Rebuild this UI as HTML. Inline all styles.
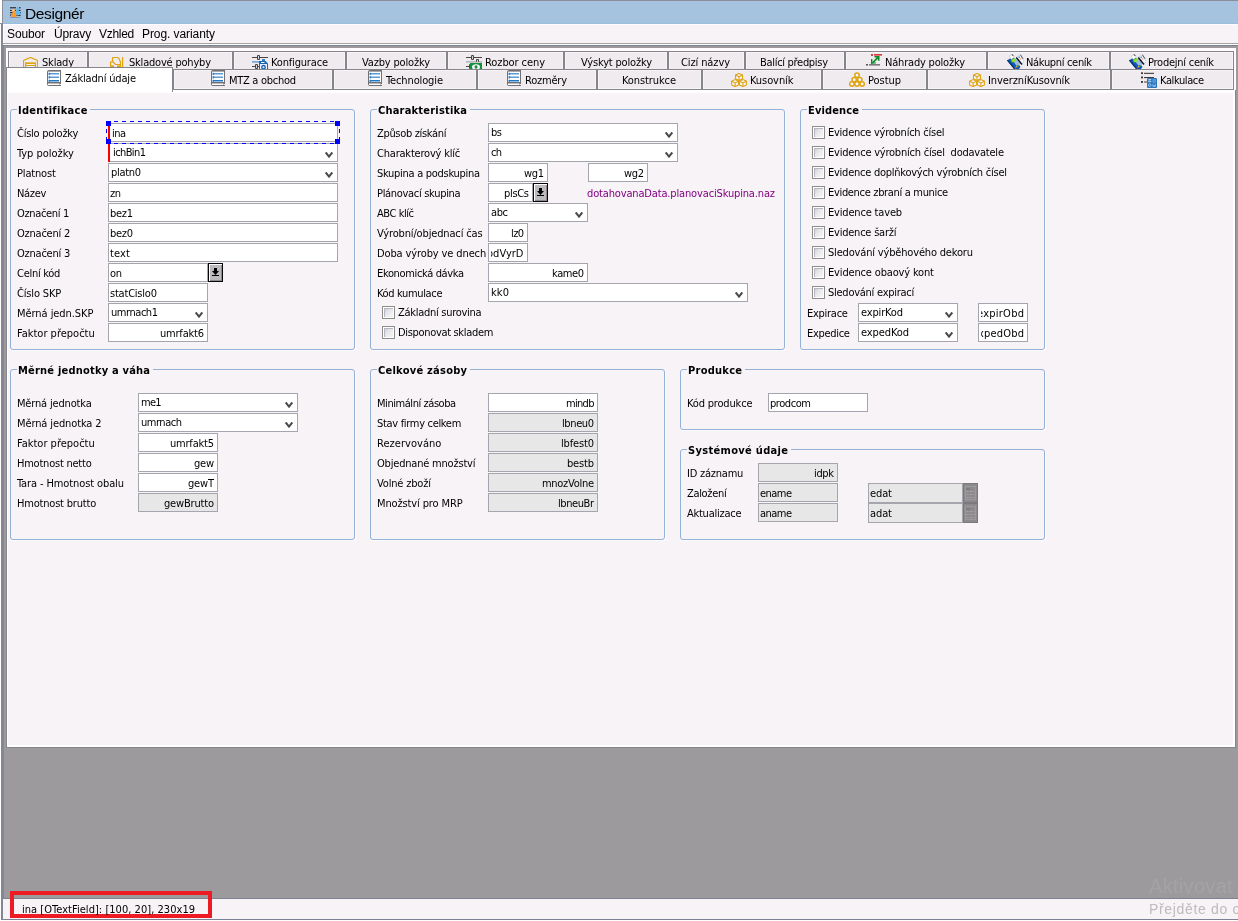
<!DOCTYPE html>
<html lang="cs"><head><meta charset="utf-8"><title>Designér</title><style>
html,body{margin:0;padding:0;background:#fff}
#r{position:relative;width:1238px;height:921px;overflow:hidden;background:#fff;font-family:"DejaVu Sans Condensed","DejaVu Sans","Liberation Sans",sans-serif;font-size:11px;color:#000}
#r div,#r svg,#r span{position:absolute;box-sizing:content-box}
#r span{white-space:pre;line-height:14px;height:14px}
.t{font-family:"DejaVu Sans Condensed","DejaVu Sans","Liberation Sans",sans-serif;font-size:11px}
.tt{font-family:"Liberation Sans","DejaVu Sans",sans-serif;font-size:15.5px}
.tm{font-family:"Liberation Sans","DejaVu Sans",sans-serif;font-size:12px}
.tw{font-family:"Liberation Sans","DejaVu Sans",sans-serif}
#r span.tt{line-height:20px;height:20px}
#r span.tm{line-height:16px;height:16px}
#r span.tw{line-height:24px;height:24px}
#r .c{overflow:hidden}
</style></head><body><div id="r">
<div style="left:3px;top:0px;width:1235px;height:1px;background:#8c8e9c;"></div>
<div style="left:1px;top:23px;width:2px;height:897px;background:#848694;"></div>
<div style="left:2px;top:0px;width:1px;height:23px;background:#8c8e9c;"></div>
<div style="left:0px;top:23px;width:3px;height:1px;background:#8c8e9c;"></div>
<div style="left:3px;top:1px;width:1235px;height:23px;background:#a5c3de;"></div>
<div style="left:3px;top:23px;width:1235px;height:1px;background:#9cbede;"></div>
<div style="left:3px;top:24px;width:1235px;height:19px;background:#f7f3f7;"></div>
<div style="left:3px;top:24px;width:1px;height:19px;background:#fffbff;"></div>
<div style="left:3px;top:24px;width:1235px;height:1px;background:#fffbff;"></div>
<div style="left:3px;top:43px;width:1235px;height:1px;background:#a5a2a5;"></div>
<div style="left:3px;top:44px;width:1235px;height:1px;background:#ffffff;"></div>
<div style="left:3px;top:45px;width:1235px;height:1px;background:#7b8294;"></div>
<div style="left:3px;top:46px;width:1px;height:852px;background:#848694;"></div>
<div style="left:4px;top:46px;width:1234px;height:852px;background:#9c9a9c;"></div>
<div style="left:6px;top:48px;width:1230px;height:42px;background:#fffbff;"></div>
<div style="left:6px;top:90px;width:1230px;height:658px;background:#84868c;"></div>
<div style="left:7px;top:90px;width:1228px;height:657px;background:#ffffff;"></div>
<div style="left:8px;top:93px;width:1225px;height:652px;background:#f7f3f7;"></div>
<div style="left:3px;top:898px;width:1235px;height:1px;background:#7b8294;"></div>
<div style="left:3px;top:899px;width:1235px;height:20px;background:#f7f3f7;"></div>
<div style="left:1px;top:919px;width:1237px;height:1px;background:#7b8294;"></div>
<svg style="left:10px;top:7px" width="11" height="11" viewBox="0 0 11 11"><path d="M0 .8h6M9 .8h1.600M0 3.400h1.600M5 3.400h1.200M8.500 3.400h2M0 5.700h2.600M10 5.700h1M0 8h1.600M6 8.300h4.600" stroke="#10101a" stroke-width="1" fill="none"/><path d="M0 10.500h10.600" stroke="#7b92ad" stroke-width=".9"/><path d="M7.600 0c1 0 1.300 .8 1.200 1.600-.1 1-.3 2 .2 2.700 1 .5 1.700 1.300 1.700 2.300 0 1.300-1.200 2-2.900 2s-2.900-.7-2.900-2c0-1 .7-1.800 1.500-2.300.5-.7.3-1.700.2-2.700C6.500 .8 6.800 0 7.600 0z" fill="#5abaef"/><path d="M3.700 1.900c1 0 1.500 .7 1.500 1.500 0 .9-.4 1.300-.4 2.100 0 1 1.800 1.500 1.800 3.200V10.100H1.100V8.700c0-1.700 1.600-2.200 1.600-3.200 0-.8-.4-1.200-.4-2.100 0-.8.500-1.500 1.400-1.500z" fill="#ff9a29"/><ellipse cx="3.700" cy="3.100" rx="1" ry=".6" fill="#fff3e0"/></svg>
<div style="left:8px;top:51px;width:78px;height:17px;background:#efebef;border:1px solid #84868c;border-bottom:none;box-shadow:inset 1px 1px 0 #f7f3f7,inset -1px 0 0 #f7f3f7"></div>
<svg style="left:23px;top:57px" width="15" height="10" viewBox="0 0 15 10"><path d="M.5 10V3.500L7.500 .4 14.500 3.500V10" fill="none" stroke="#dea510" stroke-width="1.150"/><rect x="2" y="5" width="11" height="1" fill="#e7bd52"/><rect x="2" y="6" width="11" height="1" fill="#dea510"/><rect x="2" y="7" width="1.200" height="3" fill="#dea510"/><rect x="11.800" y="7" width="1.200" height="3" fill="#dea510"/><rect x="2" y="8" width="11" height="1" fill="#dea510"/></svg>
<div style="left:88px;top:51px;width:143px;height:17px;background:#efebef;border:1px solid #84868c;border-bottom:none;box-shadow:inset 1px 1px 0 #f7f3f7,inset -1px 0 0 #f7f3f7"></div>
<svg style="left:110px;top:57px" width="14" height="10" viewBox="0 0 14 10"><path d="M2.500 4.500V1.500Q2.500 .5 3.500 .5H7.500L9 1.500 10.500 5V10M2.500 4.500L5.500 7.500H10.500M.6 10V5L2.500 4.500" fill="none" stroke="#dea510" stroke-width="1.200"/><rect x="12" y="0" width="1.200" height="10" fill="#dea510"/><rect x="1" y="8.400" width="3" height="1.600" fill="#dea510"/><rect x="7" y="8.400" width="3.500" height="1.600" fill="#dea510"/></svg>
<div style="left:233px;top:51px;width:111px;height:17px;background:#efebef;border:1px solid #84868c;border-bottom:none;box-shadow:inset 1px 1px 0 #f7f3f7,inset -1px 0 0 #f7f3f7"></div>
<svg style="left:252px;top:55px" width="16" height="14" viewBox="0 0 16 14"><rect x="0" y="2" width="16" height="1" fill="#4a4542"/><rect x="5" y="0" width="3" height="5" rx="1" fill="#4a4542"/><rect x="6" y="1" width="1" height="3" fill="#d6d3d6"/><rect x="0" y="11" width="7" height="1" fill="#4a4542"/><rect x="3" y="9" width="3" height="5" rx="1" fill="#4a4542"/><rect x="4" y="10" width="1" height="3" fill="#d6d3d6"/><rect x="0" y="6" width="8" height="1.800" fill="#84aad6"/><rect x="10" y="4" width="3" height="2.500" fill="#3a82c6"/><path d="M7 6h6.500l2.500 2.500v5.500h-9z" fill="#1565b5"/><rect x="9" y="7" width="3.500" height="1" fill="#fff"/><rect x="8" y="9" width="7" height="5" fill="#eef0ff"/><circle cx="11.500" cy="12.200" r="1.700" fill="none" stroke="#1565b5" stroke-width="1.300"/></svg>
<div style="left:346px;top:51px;width:99px;height:17px;background:#efebef;border:1px solid #84868c;border-bottom:none;box-shadow:inset 1px 1px 0 #f7f3f7,inset -1px 0 0 #f7f3f7"></div>
<div style="left:447px;top:51px;width:115px;height:17px;background:#efebef;border:1px solid #84868c;border-bottom:none;box-shadow:inset 1px 1px 0 #f7f3f7,inset -1px 0 0 #f7f3f7"></div>
<svg style="left:466px;top:55px" width="16" height="14" viewBox="0 0 16 14"><rect x="0" y="2" width="16" height="1" fill="#4a4542"/><rect x="5" y="0" width="3" height="5" rx="1" fill="#4a4542"/><rect x="6" y="1" width="1" height="3" fill="#d6d3d6"/><rect x="0" y="11" width="7" height="1" fill="#4a4542"/><rect x="3" y="9" width="3" height="5" rx="1" fill="#4a4542"/><rect x="4" y="10" width="1" height="3" fill="#d6d3d6"/><rect x="0" y="6" width="16" height="1.600" fill="#b5b5bd"/><rect x="10" y="4" width="3" height="3" rx="1" fill="#4a4542"/><rect x="11" y="5" width="1" height="2" fill="#d6d3d6"/><rect x="4" y="8" width="12" height="6" fill="#109439"/><ellipse cx="10" cy="12" rx="4" ry="2.800" fill="#fbeffb"/><ellipse cx="10" cy="12" rx="1.500" ry="1.800" fill="#109439"/></svg>
<div style="left:564px;top:51px;width:102px;height:17px;background:#efebef;border:1px solid #84868c;border-bottom:none;box-shadow:inset 1px 1px 0 #f7f3f7,inset -1px 0 0 #f7f3f7"></div>
<div style="left:668px;top:51px;width:75px;height:17px;background:#efebef;border:1px solid #84868c;border-bottom:none;box-shadow:inset 1px 1px 0 #f7f3f7,inset -1px 0 0 #f7f3f7"></div>
<div style="left:745px;top:51px;width:98px;height:17px;background:#efebef;border:1px solid #84868c;border-bottom:none;box-shadow:inset 1px 1px 0 #f7f3f7,inset -1px 0 0 #f7f3f7"></div>
<div style="left:845px;top:51px;width:140px;height:17px;background:#efebef;border:1px solid #84868c;border-bottom:none;box-shadow:inset 1px 1px 0 #f7f3f7,inset -1px 0 0 #f7f3f7"></div>
<svg style="left:866px;top:54px" width="16" height="13" viewBox="0 0 16 13"><rect x="5" y="0" width="2" height="2" fill="#ce4242"/><rect x="8" y="0" width="8" height="1" fill="#ce4242"/><rect x="8" y="1" width="8" height="1" fill="#e77373"/><path d="M6.500 9L12 3.300" stroke="#088a29" stroke-width="1.700"/><path d="M8.500 2h5v4.800h-1.600v-3.200h-3.400z" fill="#088a29"/><path d="M5 5h1.400v3.400l3.600 .2v1.400h-5z" fill="#088a29"/><path d="M5 10l5-1.500v1.500z" fill="#7bc794"/><rect x="0" y="10" width="2" height="1.600" fill="#5a595a"/><rect x="3" y="10" width="11" height="1.600" fill="#7b797b"/></svg>
<div style="left:987px;top:51px;width:121px;height:17px;background:#efebef;border:1px solid #84868c;border-bottom:none;box-shadow:inset 1px 1px 0 #f7f3f7,inset -1px 0 0 #f7f3f7"></div>
<svg style="left:1007px;top:54px" width="17" height="15" viewBox="0 0 17 15"><path d="M0 6.500L6 2.500 13.500 13 12 15H7z" fill="#1059b5"/><path d="M0 6.500l1-.7L8.500 15H7z" fill="#08306b"/><path d="M5.500 6.500l4.500-3 4 6-3.500 3.500z" fill="#9cbade"/><path d="M2.200 2.200l3.300-2 2 3-3.300 2.200z" fill="#fffff7" stroke="#bdbdbd" stroke-width=".5"/><path d="M5 .3l1.300 1.800" stroke="#313131" stroke-width="1"/><ellipse cx="6.500" cy="6.400" rx="2.300" ry="1.500" transform="rotate(-30 6.500 6.400)" fill="#8ce718"/><path d="M9.500 3.200L13 .8l4 6.500-2 3z" fill="#f7fbff" stroke="#a5c3de" stroke-width=".6"/><path d="M9.300 3.500l5.700 7" stroke="#101010" stroke-width="1.300"/><rect x="11.500" y="2.500" width="1.500" height="1.500" fill="#4a96e7"/><rect x="12.500" y="4.200" width="1.800" height="1.500" fill="#ffa58c"/><path d="M13.500 .8l2.500 4" stroke="#313131" stroke-width=".8"/><rect x="10" y="11" width="1.600" height="1.500" fill="#21964a"/><rect x="8.800" y="12" width="1.400" height="1.300" fill="#efa521"/><rect x="7.800" y="13" width="1.200" height="2" fill="#d63a31"/></svg>
<div style="left:1110px;top:51px;width:122px;height:17px;background:#efebef;border:1px solid #84868c;border-bottom:none;box-shadow:inset 1px 1px 0 #f7f3f7,inset -1px 0 0 #f7f3f7"></div>
<svg style="left:1129px;top:54px" width="17" height="15" viewBox="0 0 17 15"><path d="M0 6.500L6 2.500 13.500 13 12 15H7z" fill="#1059b5"/><path d="M0 6.500l1-.7L8.500 15H7z" fill="#08306b"/><path d="M5.500 6.500l4.500-3 4 6-3.500 3.500z" fill="#9cbade"/><path d="M2.200 2.200l3.300-2 2 3-3.300 2.200z" fill="#fffff7" stroke="#bdbdbd" stroke-width=".5"/><path d="M5 .3l1.300 1.800" stroke="#313131" stroke-width="1"/><ellipse cx="6.500" cy="6.400" rx="2.300" ry="1.500" transform="rotate(-30 6.500 6.400)" fill="#8ce718"/><path d="M9.500 3.200L13 .8l4 6.500-2 3z" fill="#f7fbff" stroke="#a5c3de" stroke-width=".6"/><path d="M9.300 3.500l5.700 7" stroke="#101010" stroke-width="1.300"/><rect x="11.500" y="2.500" width="1.500" height="1.500" fill="#4a96e7"/><rect x="12.500" y="4.200" width="1.800" height="1.500" fill="#ffa58c"/><path d="M13.500 .8l2.500 4" stroke="#313131" stroke-width=".8"/><rect x="10" y="11" width="1.600" height="1.500" fill="#21964a"/><rect x="8.800" y="12" width="1.400" height="1.300" fill="#efa521"/><rect x="7.800" y="13" width="1.200" height="2" fill="#d63a31"/></svg>
<div style="left:173px;top:69px;width:158px;height:19px;background:#efebef;border:1px solid #84868c;box-shadow:inset 1px 1px 0 #f7f3f7,inset -1px -1px 0 #f7f3f7"></div>
<svg style="left:211px;top:70px" width="14" height="16" viewBox="0 0 14 16"><path d="M0 2a2 2 0 0 1 2-2h12v13h-14z" fill="#737173"/><rect x="1" y="1.600" width="12" height="10.400" fill="#fff"/><rect x="2" y="3" width="10" height="1.500" fill="#5a9ad6"/><rect x="2" y="6.500" width="10" height="1.500" fill="#5a9ad6"/><rect x="2" y="10" width="10" height="1.500" fill="#2179c6"/><rect x="1.500" y="2.800" width="1.500" height="2" fill="#2179c6"/><rect x="1.500" y="6.300" width="1.500" height="2" fill="#2179c6"/><rect x="1.500" y="9.800" width="1.500" height="2" fill="#2179c6"/><path d="M0 13h14v1h-1v1h1v1h-12a2 2 0 0 1-2-2z" fill="#737173"/><rect x="1" y="13.500" width="11.500" height="1.500" fill="#fff"/></svg>
<div style="left:333px;top:69px;width:142px;height:19px;background:#efebef;border:1px solid #84868c;box-shadow:inset 1px 1px 0 #f7f3f7,inset -1px -1px 0 #f7f3f7"></div>
<svg style="left:368px;top:70px" width="14" height="16" viewBox="0 0 14 16"><path d="M0 2a2 2 0 0 1 2-2h12v13h-14z" fill="#737173"/><rect x="1" y="1.600" width="12" height="10.400" fill="#fff"/><rect x="2" y="3" width="10" height="1.500" fill="#5a9ad6"/><rect x="2" y="6.500" width="10" height="1.500" fill="#5a9ad6"/><rect x="2" y="10" width="10" height="1.500" fill="#2179c6"/><rect x="1.500" y="2.800" width="1.500" height="2" fill="#2179c6"/><rect x="1.500" y="6.300" width="1.500" height="2" fill="#2179c6"/><rect x="1.500" y="9.800" width="1.500" height="2" fill="#2179c6"/><path d="M0 13h14v1h-1v1h1v1h-12a2 2 0 0 1-2-2z" fill="#737173"/><rect x="1" y="13.500" width="11.500" height="1.500" fill="#fff"/></svg>
<div style="left:477px;top:69px;width:118px;height:19px;background:#efebef;border:1px solid #84868c;box-shadow:inset 1px 1px 0 #f7f3f7,inset -1px -1px 0 #f7f3f7"></div>
<svg style="left:507px;top:70px" width="14" height="16" viewBox="0 0 14 16"><path d="M0 2a2 2 0 0 1 2-2h12v13h-14z" fill="#737173"/><rect x="1" y="1.600" width="12" height="10.400" fill="#fff"/><rect x="2" y="3" width="10" height="1.500" fill="#5a9ad6"/><rect x="2" y="6.500" width="10" height="1.500" fill="#5a9ad6"/><rect x="2" y="10" width="10" height="1.500" fill="#2179c6"/><rect x="1.500" y="2.800" width="1.500" height="2" fill="#2179c6"/><rect x="1.500" y="6.300" width="1.500" height="2" fill="#2179c6"/><rect x="1.500" y="9.800" width="1.500" height="2" fill="#2179c6"/><path d="M0 13h14v1h-1v1h1v1h-12a2 2 0 0 1-2-2z" fill="#737173"/><rect x="1" y="13.500" width="11.500" height="1.500" fill="#fff"/></svg>
<div style="left:597px;top:69px;width:103px;height:19px;background:#efebef;border:1px solid #84868c;box-shadow:inset 1px 1px 0 #f7f3f7,inset -1px -1px 0 #f7f3f7"></div>
<div style="left:702px;top:69px;width:118px;height:19px;background:#efebef;border:1px solid #84868c;box-shadow:inset 1px 1px 0 #f7f3f7,inset -1px -1px 0 #f7f3f7"></div>
<svg style="left:731px;top:73px" width="16" height="14" viewBox="0 0 16 14"><path d="M4.5 2.1l3.500-1.600 3.500 1.600v3.700l-3.500 1.700-3.500-1.700z" fill="#f7f3ff" stroke="#dea510" stroke-width="1.100"/><path d="M4.5 2.1l3.500 1.700 3.500-1.700M8.0 3.8000000000000003v3.700" fill="none" stroke="#dea510" stroke-width="1.100"/><path d="M0.6 8.2l3.500-1.600 3.500 1.600v3.700l-3.500 1.700-3.500-1.700z" fill="#f7f3ff" stroke="#dea510" stroke-width="1.100"/><path d="M0.6 8.2l3.500 1.700 3.500-1.700M4.1 9.9v3.700" fill="none" stroke="#dea510" stroke-width="1.100"/><path d="M8.4 8.2l3.500-1.600 3.500 1.600v3.700l-3.500 1.700-3.500-1.700z" fill="#f7f3ff" stroke="#dea510" stroke-width="1.100"/><path d="M8.4 8.2l3.500 1.700 3.500-1.700M11.9 9.9v3.700" fill="none" stroke="#dea510" stroke-width="1.100"/></svg>
<div style="left:822px;top:69px;width:103px;height:19px;background:#efebef;border:1px solid #84868c;box-shadow:inset 1px 1px 0 #f7f3f7,inset -1px -1px 0 #f7f3f7"></div>
<svg style="left:849px;top:72px" width="16" height="15" viewBox="0 0 16 15"><circle cx="8" cy="3.2" r="2.200" fill="#f7f3ff" stroke="#dea510" stroke-width="1.500"/><circle cx="5.2" cy="7.8" r="2.200" fill="#f7f3ff" stroke="#dea510" stroke-width="1.500"/><circle cx="10.8" cy="7.8" r="2.200" fill="#f7f3ff" stroke="#dea510" stroke-width="1.500"/><circle cx="2.9" cy="12" r="2.200" fill="#f7f3ff" stroke="#dea510" stroke-width="1.500"/><circle cx="8" cy="12" r="2.200" fill="#f7f3ff" stroke="#dea510" stroke-width="1.500"/><circle cx="13.1" cy="12" r="2.200" fill="#f7f3ff" stroke="#dea510" stroke-width="1.500"/></svg>
<div style="left:927px;top:69px;width:182px;height:19px;background:#efebef;border:1px solid #84868c;box-shadow:inset 1px 1px 0 #f7f3f7,inset -1px -1px 0 #f7f3f7"></div>
<svg style="left:969px;top:73px" width="16" height="14" viewBox="0 0 16 14"><path d="M4.5 2.1l3.500-1.600 3.500 1.600v3.700l-3.500 1.700-3.500-1.700z" fill="#f7f3ff" stroke="#dea510" stroke-width="1.100"/><path d="M4.5 2.1l3.500 1.700 3.500-1.700M8.0 3.8000000000000003v3.700" fill="none" stroke="#dea510" stroke-width="1.100"/><path d="M0.6 8.2l3.500-1.600 3.500 1.600v3.700l-3.500 1.700-3.500-1.700z" fill="#f7f3ff" stroke="#dea510" stroke-width="1.100"/><path d="M0.6 8.2l3.500 1.700 3.500-1.700M4.1 9.9v3.700" fill="none" stroke="#dea510" stroke-width="1.100"/><path d="M8.4 8.2l3.500-1.600 3.500 1.600v3.700l-3.500 1.700-3.500-1.700z" fill="#f7f3ff" stroke="#dea510" stroke-width="1.100"/><path d="M8.4 8.2l3.500 1.700 3.500-1.700M11.9 9.9v3.700" fill="none" stroke="#dea510" stroke-width="1.100"/></svg>
<div style="left:1111px;top:69px;width:121px;height:19px;background:#efebef;border:1px solid #84868c;box-shadow:inset 1px 1px 0 #f7f3f7,inset -1px -1px 0 #f7f3f7"></div>
<svg style="left:1141px;top:72px" width="16" height="16" viewBox="0 0 16 16"><rect x="0" y=".3" width="2" height="1.800" fill="#423c39"/><rect x="0" y="4.500" width="2" height="1.900" fill="#423c39"/><rect x="0" y="9" width="2" height="1.900" fill="#423c39"/><rect x="3" y=".8" width="10" height="1.100" fill="#423c39"/><rect x="3" y="5" width="10" height="1.100" fill="#423c39"/><rect x="3" y="9.400" width="4" height="1.200" fill="#5a5a5a"/><rect x="6" y="6" width="10" height="10" rx="1" fill="#2975bd"/><rect x="7.200" y="7.300" width="3" height="1" fill="#e7f3ff"/><rect x="7.200" y="9" width="3" height="1.200" fill="#a5cbef"/><rect x="11.500" y="7.300" width="3.300" height="3.200" fill="#6ba6de"/><rect x="12.500" y="8.300" width="1.300" height="1.200" fill="#2975bd"/><circle cx="8.700" cy="13.200" r="1.300" fill="none" stroke="#a5cbef" stroke-width="1"/><rect x="11.500" y="11.800" width="3.300" height="3" fill="#8cbae7"/><rect x="12.300" y="11.800" width="1.700" height="1.200" fill="#2975bd"/></svg>
<div style="left:6px;top:67px;width:165px;height:24px;background:#fff;border:1px solid #84868c;border-bottom:none"></div>
<div style="left:7px;top:90px;width:165px;height:3px;background:#fff;"></div>
<svg style="left:47px;top:70px" width="14" height="16" viewBox="0 0 14 16"><path d="M0 2a2 2 0 0 1 2-2h12v13h-14z" fill="#737173"/><rect x="1" y="1.600" width="12" height="10.400" fill="#fff"/><rect x="2" y="3" width="10" height="1.500" fill="#5a9ad6"/><rect x="2" y="6.500" width="10" height="1.500" fill="#5a9ad6"/><rect x="2" y="10" width="10" height="1.500" fill="#2179c6"/><rect x="1.500" y="2.800" width="1.500" height="2" fill="#2179c6"/><rect x="1.500" y="6.300" width="1.500" height="2" fill="#2179c6"/><rect x="1.500" y="9.800" width="1.500" height="2" fill="#2179c6"/><path d="M0 13h14v1h-1v1h1v1h-12a2 2 0 0 1-2-2z" fill="#737173"/><rect x="1" y="13.500" width="11.500" height="1.500" fill="#fff"/></svg>
<div style="left:10px;top:109px;width:343px;height:239px;border:1px solid #94b2d6;border-radius:3px;box-shadow:1px 1px 0 #fffbff"></div>
<div style="left:17px;top:108px;width:73px;height:3px;background:#f7f3f7;"></div>
<div style="left:108px;top:123px;width:228px;height:17px;background:#fff;border:1px solid #a5a6ad"></div>
<div style="left:108px;top:123px;width:2px;height:19px;background:#f00;"></div>
<div style="left:108px;top:143px;width:228px;height:17px;background:#fff;border:1px solid #a5a6ad"></div>
<div style="left:108px;top:143px;width:2px;height:19px;background:#f00;"></div>
<svg style="left:325px;top:152px" width="8" height="6" viewBox="0 0 8 6"><path d="M.7 .4L4 4.600 7.300 .4" fill="none" stroke="#4a4a4a" stroke-width="2"/></svg>
<div style="left:108px;top:163px;width:228px;height:17px;background:#fff;border:1px solid #a5a6ad"></div>
<svg style="left:325px;top:172px" width="8" height="6" viewBox="0 0 8 6"><path d="M.7 .4L4 4.600 7.300 .4" fill="none" stroke="#4a4a4a" stroke-width="2"/></svg>
<div style="left:108px;top:183px;width:228px;height:17px;background:#fff;border:1px solid #a5a6ad"></div>
<div style="left:108px;top:203px;width:228px;height:17px;background:#fff;border:1px solid #a5a6ad"></div>
<div style="left:108px;top:223px;width:228px;height:17px;background:#fff;border:1px solid #a5a6ad"></div>
<div style="left:108px;top:243px;width:228px;height:17px;background:#fff;border:1px solid #a5a6ad"></div>
<div style="left:108px;top:263px;width:98px;height:17px;background:#fff;border:1px solid #a5a6ad"></div>
<div style="left:208px;top:263px;width:13px;height:17px;background:#bdbabd;border:1px solid #080808;box-shadow:inset 1px 1px 0 #fff,inset -1px -1px 0 #8c8a8c"></div>
<svg style="left:212px;top:268px" width="7" height="8" viewBox="0 0 7 8"><path d="M2 0h3v3h2l-3.500 4-3.500-4h2z" fill="#000"/><rect x="0" y="7" width="7" height="1" fill="#000"/></svg>
<div style="left:108px;top:283px;width:98px;height:17px;background:#fff;border:1px solid #a5a6ad"></div>
<div style="left:108px;top:303px;width:98px;height:17px;background:#fff;border:1px solid #a5a6ad"></div>
<svg style="left:195px;top:312px" width="8" height="6" viewBox="0 0 8 6"><path d="M.7 .4L4 4.600 7.300 .4" fill="none" stroke="#4a4a4a" stroke-width="2"/></svg>
<div style="left:108px;top:323px;width:98px;height:17px;background:#fff;border:1px solid #a5a6ad"></div>
<svg style="left:106px;top:121px" width="234" height="23" viewBox="0 0 234 23"><path d="M0 .5h234M0 22.500h234M.5 0v23M233.500 0v23" fill="none" stroke="#0000ff" stroke-width="1" stroke-dasharray="4 4"/><rect x="0" y="0" width="5" height="5" fill="#00f"/><rect x="229" y="0" width="5" height="5" fill="#00f"/><rect x="0" y="18" width="5" height="5" fill="#00f"/><rect x="229" y="18" width="5" height="5" fill="#00f"/></svg>
<div style="left:370px;top:109px;width:413px;height:239px;border:1px solid #94b2d6;border-radius:3px;box-shadow:1px 1px 0 #fffbff"></div>
<div style="left:377px;top:108px;width:93px;height:3px;background:#f7f3f7;"></div>
<div style="left:488px;top:123px;width:188px;height:17px;background:#fff;border:1px solid #a5a6ad"></div>
<svg style="left:665px;top:132px" width="8" height="6" viewBox="0 0 8 6"><path d="M.7 .4L4 4.600 7.300 .4" fill="none" stroke="#4a4a4a" stroke-width="2"/></svg>
<div style="left:488px;top:143px;width:188px;height:17px;background:#fff;border:1px solid #a5a6ad"></div>
<svg style="left:665px;top:152px" width="8" height="6" viewBox="0 0 8 6"><path d="M.7 .4L4 4.600 7.300 .4" fill="none" stroke="#4a4a4a" stroke-width="2"/></svg>
<div style="left:488px;top:163px;width:58px;height:17px;background:#fff;border:1px solid #a5a6ad"></div>
<div style="left:588px;top:163px;width:58px;height:17px;background:#fff;border:1px solid #a5a6ad"></div>
<div style="left:488px;top:183px;width:43px;height:17px;background:#fff;border:1px solid #a5a6ad"></div>
<div style="left:533px;top:183px;width:13px;height:17px;background:#bdbabd;border:1px solid #080808;box-shadow:inset 1px 1px 0 #fff,inset -1px -1px 0 #8c8a8c"></div>
<svg style="left:537px;top:188px" width="7" height="8" viewBox="0 0 7 8"><path d="M2 0h3v3h2l-3.500 4-3.500-4h2z" fill="#000"/><rect x="0" y="7" width="7" height="1" fill="#000"/></svg>
<div style="left:488px;top:203px;width:98px;height:17px;background:#fff;border:1px solid #a5a6ad"></div>
<svg style="left:575px;top:212px" width="8" height="6" viewBox="0 0 8 6"><path d="M.7 .4L4 4.600 7.300 .4" fill="none" stroke="#4a4a4a" stroke-width="2"/></svg>
<div style="left:488px;top:223px;width:38px;height:17px;background:#fff;border:1px solid #a5a6ad"></div>
<div style="left:488px;top:243px;width:38px;height:17px;background:#fff;border:1px solid #a5a6ad"></div>
<div style="left:488px;top:263px;width:98px;height:17px;background:#fff;border:1px solid #a5a6ad"></div>
<div style="left:488px;top:283px;width:258px;height:17px;background:#fff;border:1px solid #a5a6ad"></div>
<svg style="left:735px;top:292px" width="8" height="6" viewBox="0 0 8 6"><path d="M.7 .4L4 4.600 7.300 .4" fill="none" stroke="#4a4a4a" stroke-width="2"/></svg>
<div style="left:382px;top:306px;width:11px;height:11px;background:#fff;border:1px solid #8c8e8c"></div>
<div style="left:384px;top:308px;width:9px;height:9px;background:linear-gradient(135deg,#c6c7ce,#e7e7eb 45%,#f7f7f7);box-shadow:inset 1px 1px 0 #b5b6c0"></div>
<div style="left:382px;top:326px;width:11px;height:11px;background:#fff;border:1px solid #8c8e8c"></div>
<div style="left:384px;top:328px;width:9px;height:9px;background:linear-gradient(135deg,#c6c7ce,#e7e7eb 45%,#f7f7f7);box-shadow:inset 1px 1px 0 #b5b6c0"></div>
<div style="left:800px;top:109px;width:243px;height:239px;border:1px solid #94b2d6;border-radius:3px;box-shadow:1px 1px 0 #fffbff"></div>
<div style="left:807px;top:108px;width:55px;height:3px;background:#f7f3f7;"></div>
<div style="left:812px;top:126px;width:11px;height:11px;background:#fff;border:1px solid #8c8e8c"></div>
<div style="left:814px;top:128px;width:9px;height:9px;background:linear-gradient(135deg,#c6c7ce,#e7e7eb 45%,#f7f7f7);box-shadow:inset 1px 1px 0 #b5b6c0"></div>
<div style="left:812px;top:146px;width:11px;height:11px;background:#fff;border:1px solid #8c8e8c"></div>
<div style="left:814px;top:148px;width:9px;height:9px;background:linear-gradient(135deg,#c6c7ce,#e7e7eb 45%,#f7f7f7);box-shadow:inset 1px 1px 0 #b5b6c0"></div>
<div style="left:812px;top:166px;width:11px;height:11px;background:#fff;border:1px solid #8c8e8c"></div>
<div style="left:814px;top:168px;width:9px;height:9px;background:linear-gradient(135deg,#c6c7ce,#e7e7eb 45%,#f7f7f7);box-shadow:inset 1px 1px 0 #b5b6c0"></div>
<div style="left:812px;top:186px;width:11px;height:11px;background:#fff;border:1px solid #8c8e8c"></div>
<div style="left:814px;top:188px;width:9px;height:9px;background:linear-gradient(135deg,#c6c7ce,#e7e7eb 45%,#f7f7f7);box-shadow:inset 1px 1px 0 #b5b6c0"></div>
<div style="left:812px;top:206px;width:11px;height:11px;background:#fff;border:1px solid #8c8e8c"></div>
<div style="left:814px;top:208px;width:9px;height:9px;background:linear-gradient(135deg,#c6c7ce,#e7e7eb 45%,#f7f7f7);box-shadow:inset 1px 1px 0 #b5b6c0"></div>
<div style="left:812px;top:226px;width:11px;height:11px;background:#fff;border:1px solid #8c8e8c"></div>
<div style="left:814px;top:228px;width:9px;height:9px;background:linear-gradient(135deg,#c6c7ce,#e7e7eb 45%,#f7f7f7);box-shadow:inset 1px 1px 0 #b5b6c0"></div>
<div style="left:812px;top:246px;width:11px;height:11px;background:#fff;border:1px solid #8c8e8c"></div>
<div style="left:814px;top:248px;width:9px;height:9px;background:linear-gradient(135deg,#c6c7ce,#e7e7eb 45%,#f7f7f7);box-shadow:inset 1px 1px 0 #b5b6c0"></div>
<div style="left:812px;top:266px;width:11px;height:11px;background:#fff;border:1px solid #8c8e8c"></div>
<div style="left:814px;top:268px;width:9px;height:9px;background:linear-gradient(135deg,#c6c7ce,#e7e7eb 45%,#f7f7f7);box-shadow:inset 1px 1px 0 #b5b6c0"></div>
<div style="left:812px;top:286px;width:11px;height:11px;background:#fff;border:1px solid #8c8e8c"></div>
<div style="left:814px;top:288px;width:9px;height:9px;background:linear-gradient(135deg,#c6c7ce,#e7e7eb 45%,#f7f7f7);box-shadow:inset 1px 1px 0 #b5b6c0"></div>
<div style="left:858px;top:303px;width:98px;height:17px;background:#fff;border:1px solid #a5a6ad"></div>
<svg style="left:945px;top:312px" width="8" height="6" viewBox="0 0 8 6"><path d="M.7 .4L4 4.600 7.300 .4" fill="none" stroke="#4a4a4a" stroke-width="2"/></svg>
<div style="left:978px;top:303px;width:48px;height:17px;background:#fff;border:1px solid #a5a6ad"></div>
<div style="left:858px;top:323px;width:98px;height:17px;background:#fff;border:1px solid #a5a6ad"></div>
<svg style="left:945px;top:332px" width="8" height="6" viewBox="0 0 8 6"><path d="M.7 .4L4 4.600 7.300 .4" fill="none" stroke="#4a4a4a" stroke-width="2"/></svg>
<div style="left:978px;top:323px;width:48px;height:17px;background:#fff;border:1px solid #a5a6ad"></div>
<div style="left:10px;top:369px;width:343px;height:169px;border:1px solid #94b2d6;border-radius:3px;box-shadow:1px 1px 0 #fffbff"></div>
<div style="left:17px;top:368px;width:136px;height:3px;background:#f7f3f7;"></div>
<div style="left:138px;top:393px;width:158px;height:17px;background:#fff;border:1px solid #a5a6ad"></div>
<svg style="left:285px;top:402px" width="8" height="6" viewBox="0 0 8 6"><path d="M.7 .4L4 4.600 7.300 .4" fill="none" stroke="#4a4a4a" stroke-width="2"/></svg>
<div style="left:138px;top:413px;width:158px;height:17px;background:#fff;border:1px solid #a5a6ad"></div>
<svg style="left:285px;top:422px" width="8" height="6" viewBox="0 0 8 6"><path d="M.7 .4L4 4.600 7.300 .4" fill="none" stroke="#4a4a4a" stroke-width="2"/></svg>
<div style="left:138px;top:433px;width:78px;height:17px;background:#fff;border:1px solid #a5a6ad"></div>
<div style="left:138px;top:453px;width:78px;height:17px;background:#fff;border:1px solid #a5a6ad"></div>
<div style="left:138px;top:473px;width:78px;height:17px;background:#fff;border:1px solid #a5a6ad"></div>
<div style="left:138px;top:493px;width:78px;height:17px;background:#e7e7e7;border:1px solid #a5a6ad"></div>
<div style="left:370px;top:369px;width:293px;height:169px;border:1px solid #94b2d6;border-radius:3px;box-shadow:1px 1px 0 #fffbff"></div>
<div style="left:377px;top:368px;width:93px;height:3px;background:#f7f3f7;"></div>
<div style="left:488px;top:393px;width:108px;height:17px;background:#fff;border:1px solid #a5a6ad"></div>
<div style="left:488px;top:413px;width:108px;height:17px;background:#e7e7e7;border:1px solid #a5a6ad"></div>
<div style="left:488px;top:433px;width:108px;height:17px;background:#e7e7e7;border:1px solid #a5a6ad"></div>
<div style="left:488px;top:453px;width:108px;height:17px;background:#e7e7e7;border:1px solid #a5a6ad"></div>
<div style="left:488px;top:473px;width:108px;height:17px;background:#e7e7e7;border:1px solid #a5a6ad"></div>
<div style="left:488px;top:493px;width:108px;height:17px;background:#e7e7e7;border:1px solid #a5a6ad"></div>
<div style="left:680px;top:369px;width:363px;height:59px;border:1px solid #94b2d6;border-radius:3px;box-shadow:1px 1px 0 #fffbff"></div>
<div style="left:687px;top:368px;width:58px;height:3px;background:#f7f3f7;"></div>
<div style="left:768px;top:393px;width:98px;height:17px;background:#fff;border:1px solid #a5a6ad"></div>
<div style="left:680px;top:449px;width:363px;height:89px;border:1px solid #94b2d6;border-radius:3px;box-shadow:1px 1px 0 #fffbff"></div>
<div style="left:687px;top:448px;width:104px;height:3px;background:#f7f3f7;"></div>
<div style="left:758px;top:463px;width:78px;height:17px;background:#e7e7e7;border:1px solid #a5a6ad"></div>
<div style="left:758px;top:483px;width:78px;height:17px;background:#e7e7e7;border:1px solid #a5a6ad"></div>
<div style="left:868px;top:483px;width:93px;height:18px;background:#e7e7e7;border:1px solid #a5a6ad"></div>
<div style="left:963px;top:483px;width:13px;height:18px;background:#8c8a8c;border:1px solid #7b797b"></div>
<svg style="left:965px;top:486px" width="11" height="14" viewBox="0 0 11 14"><rect x=".5" y=".5" width="10" height="13" fill="none" stroke="#9c9a9c" stroke-width="1"/><rect x="1" y="2" width="4" height="1.500" fill="#7b797b"/><path d="M1.500 5.500h2M4.500 5.500h3M8.500 5.500h1M1.500 8.500h2M4.500 8.500h3M8.500 8.500h1M1.500 11.500h2M4.500 11.500h3M8.500 11.500h1" stroke="#a5a3a5" stroke-width="1.200"/></svg>
<div style="left:758px;top:503px;width:78px;height:17px;background:#e7e7e7;border:1px solid #a5a6ad"></div>
<div style="left:868px;top:503px;width:93px;height:18px;background:#e7e7e7;border:1px solid #a5a6ad"></div>
<div style="left:963px;top:503px;width:13px;height:18px;background:#8c8a8c;border:1px solid #7b797b"></div>
<svg style="left:965px;top:506px" width="11" height="14" viewBox="0 0 11 14"><rect x=".5" y=".5" width="10" height="13" fill="none" stroke="#9c9a9c" stroke-width="1"/><rect x="1" y="2" width="4" height="1.500" fill="#7b797b"/><path d="M1.500 5.500h2M4.500 5.500h3M8.500 5.500h1M1.500 8.500h2M4.500 8.500h3M8.500 8.500h1M1.500 11.500h2M4.500 11.500h3M8.500 11.500h1" stroke="#a5a3a5" stroke-width="1.200"/></svg>
<div style="left:10px;top:891px;width:194px;height:19px;border:4px solid #ed1c24"></div>
<div id="tx" style="left:0;top:0;width:1238px;height:921px;will-change:transform">
<span class="tt" id="T0" style="left:25px;top:4px;letter-spacing:-0.379px;">Designér</span>
<span class="tm" id="T1" style="left:7px;top:26px;letter-spacing:-0.117px;">Soubor</span>
<span class="tm" id="T2" style="left:54px;top:26px;letter-spacing:-0.169px;">Úpravy</span>
<span class="tm" id="T3" style="left:99px;top:26px;letter-spacing:-0.284px;">Vzhled</span>
<span class="tm" id="T4" style="left:142px;top:26px;letter-spacing:-0.075px;">Prog. varianty</span>
<div class="c" style="left:8px;top:51px;width:80px;height:16px">
<span class="t" id="T5" style="left:34px;top:5px;letter-spacing:-0.194px;">Sklady</span></div>
<div class="c" style="left:88px;top:51px;width:145px;height:18px">
<span class="t" id="T6" style="left:41px;top:5px;letter-spacing:-0.204px;">Skladové pohyby</span></div>
<div class="c" style="left:233px;top:51px;width:113px;height:18px">
<span class="t" id="T7" style="left:38px;top:5px;letter-spacing:-0.173px;">Konfigurace</span></div>
<div class="c" style="left:346px;top:51px;width:101px;height:18px">
<span class="t" id="T8" style="left:16px;top:5px;letter-spacing:-0.165px;">Vazby položky</span></div>
<div class="c" style="left:447px;top:51px;width:117px;height:18px">
<span class="t" id="T9" style="left:38px;top:5px;letter-spacing:-0.084px;">Rozbor ceny</span></div>
<div class="c" style="left:564px;top:51px;width:104px;height:18px">
<span class="t" id="T10" style="left:17px;top:5px;letter-spacing:-0.172px;">Výskyt položky</span></div>
<div class="c" style="left:668px;top:51px;width:77px;height:18px">
<span class="t" id="T11" style="left:13px;top:5px;letter-spacing:-0.111px;">Cizí názvy</span></div>
<div class="c" style="left:745px;top:51px;width:100px;height:18px">
<span class="t" id="T12" style="left:15px;top:5px;letter-spacing:-0.301px;">Balící předpisy</span></div>
<div class="c" style="left:845px;top:51px;width:142px;height:18px">
<span class="t" id="T13" style="left:40px;top:5px;letter-spacing:-0.192px;">Náhrady položky</span></div>
<div class="c" style="left:987px;top:51px;width:123px;height:18px">
<span class="t" id="T14" style="left:39px;top:5px;letter-spacing:-0.323px;">Nákupní ceník</span></div>
<div class="c" style="left:1110px;top:51px;width:124px;height:18px">
<span class="t" id="T15" style="left:38px;top:5px;letter-spacing:-0.249px;">Prodejní ceník</span></div>
<span class="t" id="T16" style="left:229px;top:74px;letter-spacing:-0.283px;">MTZ a obchod</span>
<span class="t" id="T17" style="left:386px;top:74px;letter-spacing:-0.123px;">Technologie</span>
<span class="t" id="T18" style="left:525px;top:74px;letter-spacing:-0.214px;">Rozměry</span>
<span class="t" id="T19" style="left:622px;top:74px;letter-spacing:-0.101px;">Konstrukce</span>
<span class="t" id="T20" style="left:750px;top:74px;letter-spacing:-0.078px;">Kusovník</span>
<span class="t" id="T21" style="left:868px;top:74px;letter-spacing:-0.047px;">Postup</span>
<span class="t" id="T22" style="left:988px;top:74px;letter-spacing:-0.097px;">InverzníKusovník</span>
<span class="t" id="T23" style="left:1160px;top:74px;letter-spacing:-0.391px;">Kalkulace</span>
<span class="t" id="T24" style="left:65px;top:72px;letter-spacing:-0.178px;">Základní údaje</span>
<span class="t" id="T25" style="left:18px;top:104px;font-weight:bold;letter-spacing:0.288px;">Identifikace</span>
<span class="t" id="T26" style="left:17px;top:127px;letter-spacing:-0.250px;">Číslo položky</span>
<span class="t" id="T27" style="left:17px;top:147px;letter-spacing:-0.034px;">Typ položky</span>
<span class="t" id="T28" style="left:17px;top:167px;letter-spacing:-0.162px;">Platnost</span>
<span class="t" id="T29" style="left:17px;top:187px;letter-spacing:-0.327px;">Název</span>
<span class="t" id="T30" style="left:17px;top:207px;letter-spacing:-0.335px;">Označení 1</span>
<span class="t" id="T31" style="left:17px;top:227px;letter-spacing:-0.235px;">Označení 2</span>
<span class="t" id="T32" style="left:17px;top:247px;letter-spacing:-0.235px;">Označení 3</span>
<span class="t" id="T33" style="left:17px;top:267px;letter-spacing:-0.276px;">Celní kód</span>
<span class="t" id="T34" style="left:17px;top:287px;letter-spacing:-0.152px;">Číslo SKP</span>
<span class="t" id="T35" style="left:17px;top:307px;letter-spacing:-0.059px;">Měrná jedn.SKP</span>
<span class="t" id="T36" style="left:17px;top:327px;">Faktor přepočtu</span>
<span class="t" id="T37" style="left:112px;top:127px;letter-spacing:-0.547px;">ina</span>
<span class="t" id="T38" style="left:113px;top:146px;letter-spacing:-0.596px;">ichBin1</span>
<span class="t" id="T39" style="left:111px;top:166px;letter-spacing:-0.309px;">platn0</span>
<span class="t" id="T40" style="left:110px;top:187px;letter-spacing:-0.469px;">zn</span>
<span class="t" id="T41" style="left:110px;top:207px;letter-spacing:-0.292px;">bez1</span>
<span class="t" id="T42" style="left:110px;top:227px;letter-spacing:-0.292px;">bez0</span>
<span class="t" id="T43" style="left:110px;top:247px;letter-spacing:0.161px;">text</span>
<span class="t" id="T44" style="left:110px;top:267px;letter-spacing:-0.328px;">on</span>
<span class="t" id="T45" style="left:110px;top:287px;letter-spacing:-0.212px;">statCislo0</span>
<span class="t" id="T46" style="left:111px;top:306px;letter-spacing:-0.449px;">umrnach1</span>
<span class="t" id="T47" style="left:160px;top:327px;letter-spacing:-0.205px;">umrfakt6</span>
<span class="t" id="T48" style="left:378px;top:104px;font-weight:bold;letter-spacing:0.206px;">Charakteristika</span>
<span class="t" id="T49" style="left:377px;top:127px;letter-spacing:-0.331px;">Způsob získání</span>
<span class="t" id="T50" style="left:377px;top:147px;letter-spacing:-0.205px;">Charakterový klíč</span>
<span class="t" id="T51" style="left:377px;top:167px;letter-spacing:-0.284px;">Skupina a podskupina</span>
<span class="t" id="T52" style="left:377px;top:187px;letter-spacing:-0.310px;">Plánovací skupina</span>
<span class="t" id="T53" style="left:377px;top:207px;letter-spacing:-0.442px;">ABC klíč</span>
<span class="t" id="T54" style="left:377px;top:227px;letter-spacing:-0.153px;">Výrobní/objednací čas</span>
<span class="t" id="T55" style="left:377px;top:247px;letter-spacing:-0.120px;">Doba výroby ve dnech</span>
<span class="t" id="T56" style="left:377px;top:267px;letter-spacing:-0.351px;">Ekonomická dávka</span>
<span class="t" id="T57" style="left:377px;top:287px;letter-spacing:-0.351px;">Kód kumulace</span>
<span class="t" id="T58" style="left:491px;top:126px;letter-spacing:-0.453px;">bs</span>
<span class="t" id="T59" style="left:491px;top:146px;letter-spacing:-0.700px;">ch</span>
<span class="t" id="T60" style="left:524px;top:167px;letter-spacing:-0.344px;">wg1</span>
<span class="t" id="T61" style="left:624px;top:167px;letter-spacing:-0.344px;">wg2</span>
<span class="t" id="T62" style="left:504px;top:187px;letter-spacing:-0.316px;">plsCs</span>
<span class="t" id="T63" style="left:587px;top:187px;color:#840084;letter-spacing:-0.152px;">dotahovanaData.planovaciSkupina.naz</span>
<span class="t" id="T64" style="left:491px;top:206px;letter-spacing:-0.398px;">abc</span>
<span class="t" id="T65" style="left:511px;top:227px;letter-spacing:-0.625px;">lz0</span>
<div class="c" style="left:491px;top:247px;width:34px;height:14px">
<span class="t" id="T66" style="left:-4px;top:0px;letter-spacing:0.028px;">odVyrD</span></div>
<span class="t" id="T67" style="left:552px;top:267px;letter-spacing:-0.410px;">kame0</span>
<span class="t" id="T68" style="left:491px;top:286px;letter-spacing:0.117px;">kk0</span>
<span class="t" id="T69" style="left:398px;top:306px;letter-spacing:-0.281px;">Základní surovina</span>
<span class="t" id="T70" style="left:398px;top:326px;letter-spacing:-0.327px;">Disponovat skladem</span>
<span class="t" id="T71" style="left:808px;top:104px;font-weight:bold;letter-spacing:0.138px;">Evidence</span>
<span class="t" id="T72" style="left:828px;top:126px;letter-spacing:-0.245px;">Evidence výrobních čísel</span>
<span class="t" id="T73" style="left:828px;top:146px;letter-spacing:-0.224px;">Evidence výrobních čísel  dodavatele</span>
<span class="t" id="T74" style="left:828px;top:166px;letter-spacing:-0.250px;">Evidence doplňkových výrobních čísel</span>
<span class="t" id="T75" style="left:828px;top:186px;letter-spacing:-0.324px;">Evidence zbraní a munice</span>
<span class="t" id="T76" style="left:828px;top:206px;letter-spacing:-0.174px;">Evidence taveb</span>
<span class="t" id="T77" style="left:828px;top:226px;letter-spacing:-0.225px;">Evidence šarží</span>
<span class="t" id="T78" style="left:828px;top:246px;letter-spacing:-0.172px;">Sledování výběhového dekoru</span>
<span class="t" id="T79" style="left:828px;top:266px;letter-spacing:-0.160px;">Evidence obaový kont</span>
<span class="t" id="T80" style="left:828px;top:286px;letter-spacing:-0.256px;">Sledování expirací</span>
<span class="t" id="T81" style="left:807px;top:307px;letter-spacing:-0.273px;">Expirace</span>
<span class="t" id="T82" style="left:861px;top:306px;letter-spacing:-0.163px;">expirKod</span>
<div class="c" style="left:981px;top:307px;width:44px;height:14px">
<span class="t" id="T83" style="left:-4px;top:0px;letter-spacing:0.254px;">expirObd</span></div>
<span class="t" id="T84" style="left:807px;top:327px;letter-spacing:-0.309px;">Expedice</span>
<span class="t" id="T85" style="left:861px;top:326px;letter-spacing:-0.100px;">expedKod</span>
<div class="c" style="left:981px;top:327px;width:44px;height:14px">
<span class="t" id="T86" style="left:-9px;top:0px;letter-spacing:0.174px;">expedObd</span></div>
<span class="t" id="T87" style="left:18px;top:364px;font-weight:bold;letter-spacing:0.207px;">Měrné jednotky a váha</span>
<span class="t" id="T88" style="left:17px;top:397px;letter-spacing:-0.171px;">Měrná jednotka</span>
<span class="t" id="T89" style="left:17px;top:417px;letter-spacing:-0.117px;">Měrná jednotka 2</span>
<span class="t" id="T90" style="left:17px;top:437px;">Faktor přepočtu</span>
<span class="t" id="T91" style="left:17px;top:457px;letter-spacing:-0.231px;">Hmotnost netto</span>
<span class="t" id="T92" style="left:17px;top:477px;letter-spacing:-0.111px;">Tara - Hmotnost obalu</span>
<span class="t" id="T93" style="left:17px;top:497px;letter-spacing:-0.197px;">Hmotnost brutto</span>
<span class="t" id="T94" style="left:141px;top:396px;letter-spacing:-0.700px;">me1</span>
<span class="t" id="T95" style="left:141px;top:416px;letter-spacing:-0.474px;">umrnach</span>
<span class="t" id="T96" style="left:170px;top:437px;letter-spacing:-0.205px;">umrfakt5</span>
<span class="t" id="T97" style="left:194px;top:457px;letter-spacing:-0.242px;">gew</span>
<span class="t" id="T98" style="left:188px;top:477px;letter-spacing:-0.172px;">gewT</span>
<span class="t" id="T99" style="left:164px;top:497px;letter-spacing:-0.178px;">gewBrutto</span>
<span class="t" id="T100" style="left:378px;top:364px;font-weight:bold;letter-spacing:0.252px;">Celkové zásoby</span>
<span class="t" id="T101" style="left:377px;top:397px;letter-spacing:-0.443px;">Minimální zásoba</span>
<span class="t" id="T102" style="left:377px;top:417px;letter-spacing:-0.314px;">Stav firmy celkem</span>
<span class="t" id="T103" style="left:377px;top:437px;letter-spacing:0.042px;">Rezervováno</span>
<span class="t" id="T104" style="left:377px;top:457px;letter-spacing:-0.197px;">Objednané množství</span>
<span class="t" id="T105" style="left:377px;top:477px;letter-spacing:-0.170px;">Volné zboží</span>
<span class="t" id="T106" style="left:377px;top:497px;letter-spacing:-0.129px;">Množství pro MRP</span>
<span class="t" id="T107" style="left:566px;top:397px;letter-spacing:-0.700px;">mindb</span>
<span class="t" id="T108" style="left:562px;top:417px;letter-spacing:-0.394px;">lbneu0</span>
<span class="t" id="T109" style="left:561px;top:437px;letter-spacing:-0.156px;">lbfest0</span>
<span class="t" id="T110" style="left:567px;top:457px;letter-spacing:-0.176px;">bestb</span>
<span class="t" id="T111" style="left:542px;top:477px;letter-spacing:-0.281px;">mnozVolne</span>
<span class="t" id="T112" style="left:558px;top:497px;letter-spacing:-0.422px;">lbneuBr</span>
<span class="t" id="T113" style="left:688px;top:364px;font-weight:bold;letter-spacing:0.252px;">Produkce</span>
<span class="t" id="T114" style="left:687px;top:397px;letter-spacing:-0.173px;">Kód produkce</span>
<span class="t" id="T115" style="left:770px;top:397px;letter-spacing:-0.432px;">prodcom</span>
<span class="t" id="T116" style="left:688px;top:444px;font-weight:bold;letter-spacing:0.318px;">Systémové údaje</span>
<span class="t" id="T117" style="left:687px;top:467px;letter-spacing:-0.221px;">ID záznamu</span>
<span class="t" id="T118" style="left:687px;top:487px;letter-spacing:-0.324px;">Založení</span>
<span class="t" id="T119" style="left:687px;top:507px;letter-spacing:-0.252px;">Aktualizace</span>
<span class="t" id="T120" style="left:814px;top:467px;letter-spacing:-0.354px;">idpk</span>
<span class="t" id="T121" style="left:760px;top:487px;letter-spacing:-0.543px;">ename</span>
<span class="t" id="T122" style="left:870px;top:487px;letter-spacing:-0.109px;">edat</span>
<span class="t" id="T123" style="left:760px;top:507px;letter-spacing:-0.535px;">aname</span>
<span class="t" id="T124" style="left:870px;top:507px;letter-spacing:-0.099px;">adat</span>
<span class="t" id="T125" style="left:22px;top:903px;letter-spacing:0.033px;">ina [OTextField]: [100, 20], 230x19</span>
<span class="tw" id="T126" style="left:1149px;top:874px;color:#a5a3a5;font-size:20px;letter-spacing:0.316px;">Aktivovat</span>
<span class="tw" id="T127" style="left:1149px;top:897px;color:#bdbbbd;font-size:14px;letter-spacing:0.669px;">Přejděte do o</span></div>
</div></body></html>
